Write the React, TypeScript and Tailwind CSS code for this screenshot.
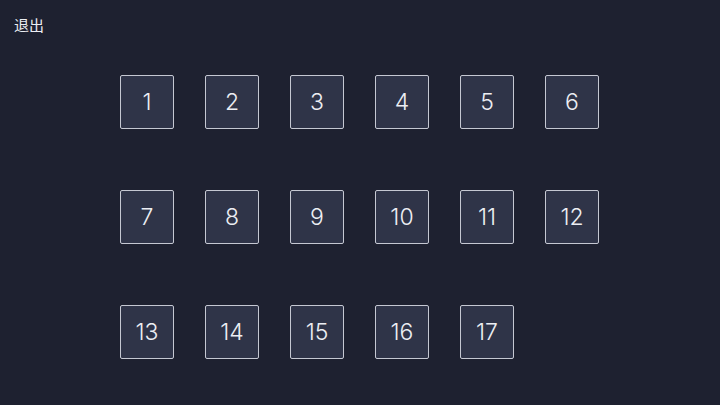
import React from "react";

const levels = Array.from({ length: 17 }, (_, i) => i + 1);

export default function App() {
  return (
    <div className="w-[720px] h-[405px] bg-[#1e2130] text-[#eceef3] font-['Inter','Noto_Sans_CJK_SC',sans-serif] overflow-hidden">
      <div className="pl-[14px] pt-[13px] h-[75px]">
        <button className="text-[15px] leading-[20px] text-[#eceef3]">退出</button>
      </div>
      <div className="w-[480px] mx-auto grid grid-cols-[repeat(6,54px)] gap-x-[31px] gap-y-[61px]">
        {levels.map((n) => (
          <div
            key={n}
            className="w-[54px] h-[54px] flex items-center justify-center bg-[#2f3448] border border-[#c5c8d2] rounded-[2px] text-[23px] font-light"
          >
            {n}
          </div>
        ))}
      </div>
    </div>
  );
}
